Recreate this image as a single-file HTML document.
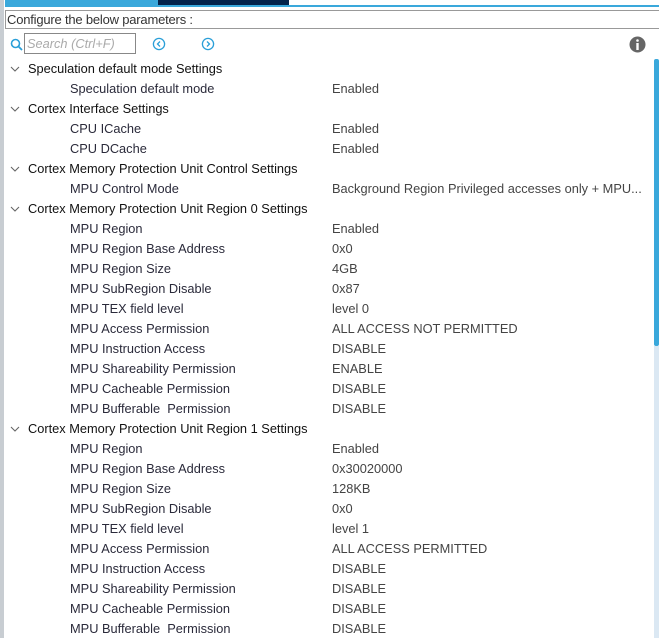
<!DOCTYPE html>
<html><head><meta charset="utf-8"><style>
body{margin:0;width:659px;height:638px;overflow:hidden;background:#fff;font-family:"Liberation Sans",Arial,sans-serif;font-size:12.8px;color:#222;position:relative}
.abs{position:absolute}
.row{position:absolute;height:20px;line-height:20px;white-space:nowrap}
.g{left:28px;color:#111}
.c{left:70px;color:#2a2a3a}
.v{left:332px;color:#444}
.chev{position:absolute;left:10px;width:10px;height:10px}
</style></head><body>
<div class="abs" style="left:0;top:0;width:4px;height:638px;background:#c8cdd2"></div>
<div class="abs" style="left:5px;top:0;width:153px;height:6px;background:#3aa8db"></div>
<div class="abs" style="left:158px;top:0;width:131px;height:5px;background:#03234b"></div>
<div class="abs" style="left:5px;top:5px;width:654px;height:2px;background:#3aa8db"></div>
<div class="abs" style="left:5px;top:10px;width:654px;height:19px;border-top:1px solid #999;border-bottom:1px solid #999;border-left:1px solid #999;box-sizing:border-box;line-height:17px;font-size:13px;color:#333;padding-left:1px;letter-spacing:-0.2px">Configure the below parameters :</div>
<svg class="abs" style="left:10px;top:38px" width="14" height="14"><circle cx="5.5" cy="5.5" r="4" fill="none" stroke="#2a9fd8" stroke-width="1.6"/><line x1="8.5" y1="8.5" x2="12" y2="12" stroke="#2a9fd8" stroke-width="1.8"/></svg>
<div class="abs" style="left:24px;top:33px;width:112px;height:21px;border:1px solid #888;box-sizing:border-box;color:#aaa;font-style:italic;line-height:19px;padding-left:2px">Search (Ctrl+F)</div>
<svg class="abs" style="left:152px;top:37px" width="14" height="14"><circle cx="7" cy="7" r="5.6" fill="none" stroke="#2a9fd8" stroke-width="1.3"/><path d="M8 4.5 L5.5 7 L8 9.5" fill="none" stroke="#2a9fd8" stroke-width="1.3"/></svg>
<svg class="abs" style="left:201px;top:37px" width="14" height="14"><circle cx="7" cy="7" r="5.6" fill="none" stroke="#2a9fd8" stroke-width="1.3"/><path d="M6 4.5 L8.5 7 L6 9.5" fill="none" stroke="#2a9fd8" stroke-width="1.3"/></svg>
<svg class="abs" style="left:629px;top:36px" width="17" height="17"><circle cx="8.5" cy="8.5" r="8" fill="#666"/><circle cx="8.5" cy="4.5" r="1.3" fill="#fff"/><rect x="7.3" y="7" width="2.4" height="7" fill="#fff"/></svg>
<div class="abs" style="left:654px;top:59px;width:5px;height:287px;background:#3aa8db;border-radius:2px"></div>
<div class="abs" style="left:654px;top:346px;width:5px;height:292px;background:#dbe8f3"></div>
<div id="rows"></div>
<script>
var d=[
['g','Speculation default mode Settings'],['c','Speculation default mode','Enabled'],
['g','Cortex Interface Settings'],['c','CPU ICache','Enabled'],['c','CPU DCache','Enabled'],
['g','Cortex Memory Protection Unit Control Settings'],['c','MPU Control Mode','Background Region Privileged accesses only + MPU...'],
['g','Cortex Memory Protection Unit Region 0 Settings'],['c','MPU Region','Enabled'],['c','MPU Region Base Address','0x0'],['c','MPU Region Size','4GB'],['c','MPU SubRegion Disable','0x87'],['c','MPU TEX field level','level 0'],['c','MPU Access Permission','ALL ACCESS NOT PERMITTED'],['c','MPU Instruction Access','DISABLE'],['c','MPU Shareability Permission','ENABLE'],['c','MPU Cacheable Permission','DISABLE'],['c','MPU Bufferable&nbsp; Permission','DISABLE'],
['g','Cortex Memory Protection Unit Region 1 Settings'],['c','MPU Region','Enabled'],['c','MPU Region Base Address','0x30020000'],['c','MPU Region Size','128KB'],['c','MPU SubRegion Disable','0x0'],['c','MPU TEX field level','level 1'],['c','MPU Access Permission','ALL ACCESS PERMITTED'],['c','MPU Instruction Access','DISABLE'],['c','MPU Shareability Permission','DISABLE'],['c','MPU Cacheable Permission','DISABLE'],['c','MPU Bufferable&nbsp; Permission','DISABLE']];
var h='';d.forEach(function(r,i){var t=59+i*20;
if(r[0]=='g'){h+='<svg class="chev" style="top:'+(t+6)+'px" width="10" height="8"><path d="M1 2 L5 6 L9 2" fill="none" stroke="#666" stroke-width="1.1"/></svg><div class="row g" style="top:'+t+'px">'+r[1]+'</div>';}
else{h+='<div class="row c" style="top:'+t+'px">'+r[1]+'</div><div class="row v" style="top:'+t+'px">'+r[2]+'</div>';}});
document.getElementById('rows').innerHTML=h;
</script>
</body></html>
